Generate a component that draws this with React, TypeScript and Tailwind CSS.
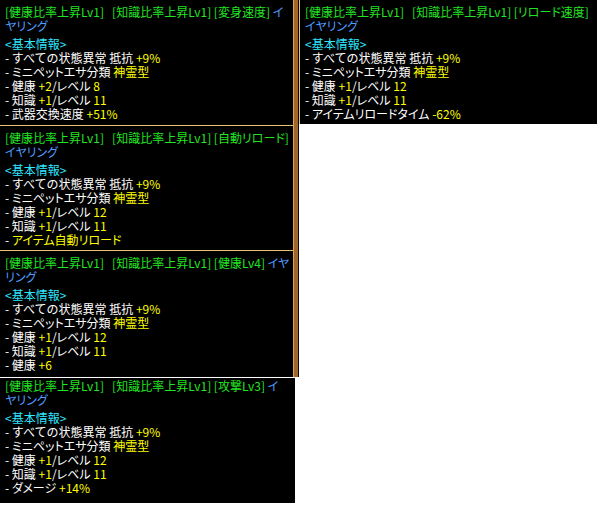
import React from "react";

type Seg = { t: string; c: "g" | "b" | "c" | "w" | "y" };
const colorClass: Record<Seg["c"], string> = {
  g: "text-[#22e422]",
  b: "text-[#4f9cff]",
  c: "text-[#2fe6ff]",
  w: "text-white",
  y: "text-[#ffff00]",
};

function Kana({ t }: { t: string }) {
  const parts = t.split(/([\u30A0-\u30FF]+)/);
  return (
    <>
      {parts.map((p, i) =>
        /^[\u30A0-\u30FF]+$/.test(p) ? (
          <span key={i} className="[font-feature-settings:'palt']">
            {p}
          </span>
        ) : (
          <React.Fragment key={i}>{p}</React.Fragment>
        )
      )}
    </>
  );
}

function Line({ segs }: { segs: Seg[] }) {
  return (
    <div className="flex h-[14px]">
      {segs.map((s, i) => (
        <span key={i} className={"block h-[14px] leading-[14px] whitespace-pre " + colorClass[s.c]}>
          <Kana t={s.t} />
        </span>
      ))}
    </div>
  );
}

const common: Seg[][] = [
  [{ t: "- すべての状態異常 抵抗 ", c: "w" }, { t: "+9%", c: "y" }],
  [{ t: "- ミニペットエサ分類 ", c: "w" }, { t: "神霊型", c: "y" }],
];

const lvRows = (a: [string, string], b: [string, string]): Seg[][] => [
  [{ t: "- 健康 ", c: "w" }, { t: a[0], c: "y" }, { t: "/レベル ", c: "w" }, { t: a[1], c: "y" }],
  [{ t: "- 知識 ", c: "w" }, { t: b[0], c: "y" }, { t: "/レベル ", c: "w" }, { t: b[1], c: "y" }],
];

function Tooltip({
  title,
  rows,
  className,
}: {
  title: Seg[][];
  rows: Seg[][];
  className: string;
}) {
  return (
    <div
      className={"bg-black pl-[5px] text-[12px] overflow-hidden " + className}
      style={{ fontFamily: '"Noto Sans CJK JP", "Noto Sans", sans-serif' }}
    >
      {title.map((l, i) => (
        <Line key={i} segs={l} />
      ))}
      <div className="h-[4px]" />
      <Line segs={[{ t: "<基本情報>", c: "c" }]} />
      {rows.map((l, i) => (
        <Line key={i} segs={l} />
      ))}
    </div>
  );
}

const G = "[健康比率上昇Lv1]   [知識比率上昇Lv1] ";

export default function App() {
  return (
    <div className="flex w-[597px] h-[512px] bg-white items-start">
      <div className="flex flex-col w-[299px]">
        <div className="flex">
          <div className="flex flex-col w-[293px]">
            <Tooltip
              className="h-[125px] pt-[5px]"
              title={[
                [{ t: G + "[変身速度] ", c: "g" }, { t: "イ", c: "b" }],
                [{ t: "ヤリング", c: "b" }],
              ]}
              rows={[
                ...common,
                ...lvRows(["+2", "8"], ["+1", "11"]),
                [{ t: "- 武器交換速度 ", c: "w" }, { t: "+51%", c: "y" }],
              ]}
            />
            <div className="h-px bg-[#e6c46e]" />
            <Tooltip
              className="h-[124px] pt-[5px]"
              title={[[{ t: G + "[自動リロード]", c: "g" }], [{ t: "イヤリング", c: "b" }]]}
              rows={[
                ...common,
                ...lvRows(["+1", "12"], ["+1", "11"]),
                [{ t: "- ", c: "w" }, { t: "アイテム自動リロード", c: "y" }],
              ]}
            />
            <div className="h-px bg-[#e6c46e]" />
            <Tooltip
              className="h-[126px] pt-[5px]"
              title={[
                [{ t: G + "[健康Lv4] ", c: "g" }, { t: "イヤ", c: "b" }],
                [{ t: "リング", c: "b" }],
              ]}
              rows={[
                ...common,
                ...lvRows(["+1", "12"], ["+1", "11"]),
                [{ t: "- 健康 ", c: "w" }, { t: "+6", c: "y" }],
              ]}
            />
          </div>
          <div className="flex w-[6px]">
            <div className="w-px bg-[#d9a85a]" />
            <div className="w-[4px] bg-[#a4652b]" />
            <div className="w-px bg-[#0a0a0a]" />
          </div>
        </div>
        <div className="h-px bg-white" />
        <Tooltip
          className="w-[295px] h-[125px] pt-[1px]"
          title={[
            [{ t: G + "[攻撃Lv3] ", c: "g" }, { t: "イ", c: "b" }],
            [{ t: "ヤリング", c: "b" }],
          ]}
          rows={[
            ...common,
            ...lvRows(["+1", "12"], ["+1", "11"]),
            [{ t: "- ダメージ ", c: "w" }, { t: "+14%", c: "y" }],
          ]}
        />
      </div>
      <div className="flex h-[124px] w-[298px]">
        <div className="w-px bg-[#e6c46e]" />
        <Tooltip
          className="flex-1 h-[124px] pt-[5px]"
          title={[[{ t: G + "[リロード速度]", c: "g" }], [{ t: "イヤリング", c: "b" }]]}
          rows={[
            ...common,
            ...lvRows(["+1", "12"], ["+1", "11"]),
            [{ t: "- アイテムリロードタイム ", c: "w" }, { t: "-62%", c: "y" }],
          ]}
        />
      </div>
    </div>
  );
}
